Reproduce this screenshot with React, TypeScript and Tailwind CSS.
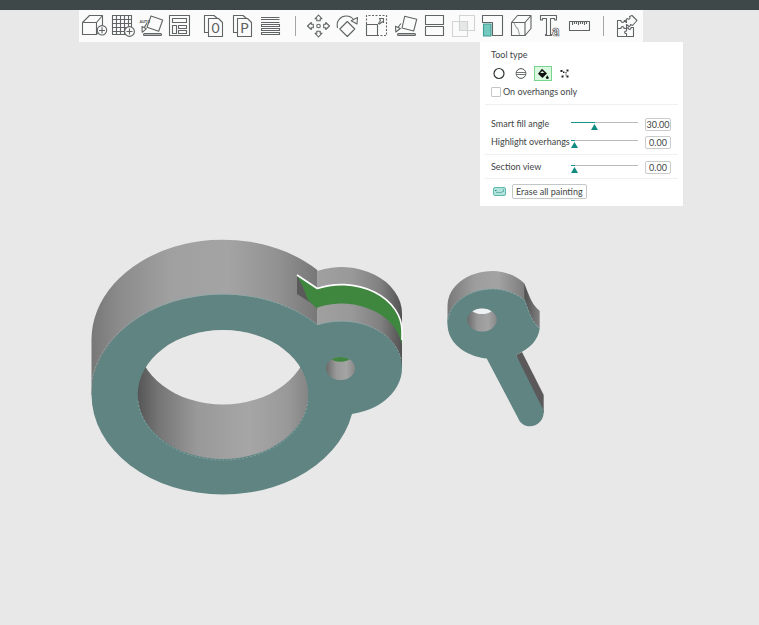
import { useState } from "react";
import type { ReactNode } from "react";

function ToolButton({ label, children }: { label: string; children: ReactNode }) {
  return (
    <button type="button" aria-label={label} className="flex h-8 w-[29px] items-center justify-center">
      <svg
        width="29"
        height="24"
        viewBox="0 0 29 24"
        fill="none"
        stroke="#606464"
        strokeWidth="1.1"
        strokeLinejoin="round"
        className="overflow-visible"
      >
        {children}
      </svg>
    </button>
  );
}

function Separator() {
  return (
    <div className="flex w-[18px] justify-center">
      <div className="h-5 w-px bg-[#a3a6a6]" />
    </div>
  );
}

function Pages({ glyph }: { glyph: string }) {
  return (
    <>
      <path d="M9.5 18.5H5.5V1.5H15L18.5 4.5" />
      <path d="M9.5 4.5H19.5L23.5 8.5V22.5H9.5Z" fill="#fbfbfb" />
      <text x="16.5" y="18.5" textAnchor="middle" stroke="none" fill="#5c6060" className="font-['Lato',sans-serif] text-[14px]">
        {glyph}
      </text>
    </>
  );
}

function Toolbar() {
  return (
    <nav aria-label="Toolbar" className="relative ml-[79px] flex w-fit items-center bg-[#fbfbfb] pr-0.5">
      <ToolButton label="Add">
        <path d="M3.5 8.5H17.5V20.5H3.5Z M3.5 8.5L10.5 1.5H23.5L17.5 8.5 M23.5 1.5V12 M17.5 20.5L19 18.5" />
        <circle cx="23" cy="16.3" r="4.7" fill="#fbfbfb" />
        <path d="M20 16.5H26M23 13.3V19.3" />
      </ToolButton>
      <ToolButton label="Add plate">
        <path d="M4.5 1.5H23.5V20.5H4.5Z M8.5 1.5V20.5M12.5 1.5V20.5M16.5 1.5V20.5M20.5 1.5V20.5M4.5 5.5H23.5M4.5 9.5H23.5M4.5 13.5H23.5M4.5 17.5H23.5" />
        <circle cx="21.5" cy="17.5" r="4.9" fill="#fbfbfb" />
        <path d="M18.5 17.5H24.5M21.5 14.5V20.5" />
      </ToolButton>
      <ToolButton label="Auto orient">
        <path d="M14 2L25.7 6L21.7 17.3L10 13.3Z" />
        <path d="M10 9L7.4 13.4M5 12.5L5.2 18.3L9.3 14.8Z" />
        <rect x="6.5" y="19.5" width="18" height="2" rx="1" fill="#b5b8b8" />
        <text x="2.5" y="8.5" stroke="none" fill="#4d5151" className="font-['Roboto',sans-serif] text-[4px] font-bold">AUTO</text>
      </ToolButton>
      <ToolButton label="Arrange">
        <path d="M3.5 1.5H23.5V21.5H3.5Z M6.5 4.5H20.5V8.5H6.5Z M6.5 11.5H10.5V19.5H6.5Z M12.5 11.5H20.5V14.5H12.5Z M12.5 16.5H20.5V19.5H12.5Z" />
      </ToolButton>
      <div className="w-1" />
      <ToolButton label="Split to objects">
        <Pages glyph="0" />
      </ToolButton>
      <ToolButton label="Split to parts">
        <Pages glyph="P" />
      </ToolButton>
      <ToolButton label="Variable layer height">
        <path d="M4 3.5H22.5M4 5.5H22.5M4 8.5H22.5M4.5 10.5H22.5V12.5H4.5Z M4.5 14.5H22.5V16.5H4.5Z M4.5 18.5H22.5V20.5H4.5Z" />
      </ToolButton>
      <Separator />
      <ToolButton label="Move">
        <circle cx="14.5" cy="12" r="1.8" />
        <path d="M14.5 1L18 4.8H16.2V6.8H12.8V4.8H11Z M14.5 23L18 19.2H16.2V17.2H12.8V19.2H11Z M3.5 12L7.3 8.5V10.3H9.3V13.7H7.3V15.5Z M25.5 12L21.7 8.5V10.3H19.7V13.7H21.7V15.5Z" />
      </ToolButton>
      <ToolButton label="Rotate">
        <path d="M14.3 7.5L21.8 15L14.3 22.5L6.8 15Z M4.5 14C2.6 6.2 8.5 2 13 2C17 2 19.5 3.8 20.8 6 M18.2 6.8L24.5 3.6L24 10Z" />
      </ToolButton>
      <ToolButton label="Scale">
        <path d="M4.5 10V1.5H24.5V21.5H16" strokeDasharray="2 1.5" />
        <path d="M4.5 10.5H15.5V21.5H4.5Z M16.5 9.5L18.5 6.5L17.5 4.5H21.5V8.5L20.3 7.8L17.5 10Z" />
      </ToolButton>
      <ToolButton label="Lay on face">
        <path d="M13.7 2.3L25.7 5.3L22.7 17L11 14Z M10 9.5L7.3 13M4.5 12.2L4.8 18L9.3 14.5Z" />
        <rect x="6.5" y="19.5" width="18" height="2" rx="1" fill="#b5b8b8" />
      </ToolButton>
      <ToolButton label="Cut">
        <path d="M5.5 1.5H23.5V10.5H5.5Z M5.5 12.5H23.5V21.5H5.5Z" />
      </ToolButton>
      <ToolButton label="Boolean">
        <g stroke="#d2d4d4">
          <path d="M3.5 7.5H18.5V22.5H3.5Z M10.5 1.5H25.5V16.5H10.5Z" />
          <path d="M10.5 7.5H18.5V16.5H10.5Z" fill="#e6e7e7" />
        </g>
      </ToolButton>
      <ToolButton label="Support painting">
        <path d="M4.5 1.5H24.5V21.5H14.5V8.5H4.5Z" />
        <path d="M5.5 10H13V22H5.5Z" fill="#74c9bf" stroke="#3f9e94" />
      </ToolButton>
      <ToolButton label="Seam painting">
        <path d="M4.5 8.5H18V21.5H4.5Z M4.5 8.5L10.5 1.5H24L18 8.5 M24 1.5V14.5L18 21.5" />
        <path d="M7 9L9 13L11 15L12.5 21" stroke="#a3a6a6" />
      </ToolButton>
      <ToolButton label="Text">
        <path d="M4.5 1.5H20.5V6H18.5V4.5H14.5V20.5H15.5V21.5H9.5V20.5H10.5V4.5H6.5V6H4.5Z" />
        <text x="16" y="22" strokeWidth="0.7" fill="#fbfbfb" className="font-['Roboto',sans-serif] text-[14px] font-bold">a</text>
      </ToolButton>
      <ToolButton label="Measure">
        <path d="M4.5 7.5H24.5V16.5H4.5Z M7.5 8V11M9.5 8V10M11.5 8V10M13.5 8V11M15.5 8V10M17.5 8V10M19.5 8V11M21.5 8V10" />
      </ToolButton>
      <Separator />
      <ToolButton label="Assembly view">
        <path d="M5.5 6.5H9C8.5 9 12.8 9 12.3 6.5H14.5V8.5L13 7.5L15 4.5C17 6 19 4.5 17.5 2.5L20 1.5L25 6.5L20.5 11.5L18.5 10.5C18.5 12 17.5 13 16.5 12L14.5 10.5V14.5H12C12.5 12 8.5 12 9 14.5H5.5Z" />
        <path d="M5.5 14.5V22.5H21.5V13.5H19C19.3 16 16 16 16.2 13.5L14.5 14.5V17C12 16.5 12 20 14.5 19.5V22.5" />
      </ToolButton>
    </nav>
  );
}

const toolIcons: { name: string; icon: ReactNode }[] = [
  { name: "Circle", icon: <circle cx="8" cy="6.5" r="5" fill="none" stroke="#303434" strokeWidth="1.2" /> },
  {
    name: "Sphere",
    icon: (
      <g fill="none" stroke="#505454">
        <circle cx="8" cy="6.5" r="4.9" />
        <path d="M3.5 5.5H12.5M3.5 7.5H12.5" strokeWidth="0.8" />
      </g>
    ),
  },
  {
    name: "Smart fill",
    icon: (
      <g fill="#111" stroke="none">
        <path d="M7 1.8L12 6.6L7.4 11L3 6.8Z" />
        <path d="M12.3 8.3L13.5 10.3A1.3 1.3 0 1 1 11.1 10.3Z" />
        <path d="M5.2 6.1L7.2 4L9.3 6.1Z" fill="#d9f8df" />
      </g>
    ),
  },
  {
    name: "Gap fill",
    icon: (
      <path
        d="M3.5 3h2v2h-2z M6 4.5h1.5v1.5h-1.5z M9.5 2.5h2v2h-2z M8.5 5h1v1.5h-1z M4.5 8.5h2v2h-2z M9.5 8.5h2v2h-2z M8.5 7.5h1v1h-1z"
        fill="#222"
      />
    ),
  },
];

function SliderRow({ id, label, initial }: { id: string; label: string; initial: number }) {
  const [value, setValue] = useState(initial);
  const fill = 4 + (value / 90) * 60;
  return (
    <div className="flex h-[18px] items-center pr-3 pl-[11px]">
      <label htmlFor={id} className="w-20 whitespace-nowrap">
        {label}
      </label>
      <input
        id={id}
        type="range"
        min={0}
        max={90}
        value={value}
        onChange={(e) => setValue(Number(e.target.value))}
        style={{ backgroundImage: `linear-gradient(to right, #16938a ${fill}px, #b8bcbc ${fill}px)` }}
        className="h-[14px] w-[67px] appearance-none bg-[length:100%_1px] bg-[position:0_5px] bg-no-repeat [&::-webkit-slider-runnable-track]:h-[14px] [&::-webkit-slider-thumb]:mt-[7px] [&::-webkit-slider-thumb]:h-[6px] [&::-webkit-slider-thumb]:w-[7px] [&::-webkit-slider-thumb]:appearance-none [&::-webkit-slider-thumb]:bg-[#128c82] [&::-webkit-slider-thumb]:[clip-path:polygon(50%_0,100%_100%,0_100%)]"
      />
      <input
        type="text"
        aria-label={`${label} value`}
        value={value.toFixed(2)}
        onChange={(e) => setValue(Number(e.target.value) || 0)}
        className="ml-auto h-[13px] w-[26px] rounded-[2px] border border-[#c9cccc] bg-white text-center"
      />
    </div>
  );
}

function PaintPanel() {
  const [tool, setTool] = useState("Smart fill");
  return (
    <section
      aria-label="Support painting"
      className="relative ml-[480px] w-[203px] bg-white pt-[7px] pb-[7px] font-['Lato','Liberation_Sans',sans-serif] text-[9px] leading-3 text-[#424646]"
    >
      <h2 className="px-[11px]">Tool type</h2>
      <div className="mt-1.5 flex gap-1.5 px-[11px]">
        {toolIcons.map(({ name, icon }) => (
          <button
            key={name}
            type="button"
            aria-label={name}
            aria-pressed={tool === name}
            onClick={() => setTool(name)}
            className={
              tool === name
                ? "h-[13px] w-4 bg-[#d9f8df] outline outline-[#7ad48f]"
                : "h-[13px] w-4"
            }
          >
            <svg width="16" height="13" viewBox="0 0 16 13">
              {icon}
            </svg>
          </button>
        ))}
      </div>
      <label className="mt-1.5 flex items-center gap-0.5 px-[11px]">
        <input
          type="checkbox"
          className="size-[10px] appearance-none rounded-[1px] border border-[#c4c7c7] bg-white checked:bg-[#16938a]"
        />
        On overhangs only
      </label>
      <hr className="mx-[5px] mt-1.5 border-[#f0f0f0]" />
      <div className="mt-[10px]">
        <SliderRow id="fill-angle" label="Smart fill angle" initial={30} />
        <SliderRow id="overhangs" label="Highlight overhangs" initial={0} />
      </div>
      <hr className="mx-[5px] mt-[3px] border-[#f0f0f0]" />
      <div className="mt-[3px]">
        <SliderRow id="section" label="Section view" initial={0} />
      </div>
      <hr className="mx-[5px] mt-0.5 border-[#f0f0f0]" />
      <div className="mt-[5px] flex items-center gap-1.5 px-[13px]">
        <button type="button" aria-label="Keyboard shortcuts">
          <svg width="13" height="9" viewBox="0 0 13 9" className="block">
            <rect x="0.5" y="0.5" width="12" height="8" rx="1.5" fill="#b2e2dc" stroke="#5fb9ae" />
            <path d="M2 3.5H3.5M3.5 5.5H4.5M5.5 5.5H6.5M7.5 5.5H8.5M9.5 4.5H10.5M10 3H11" stroke="#26897f" />
          </svg>
        </button>
        <button type="button" className="h-[15px] rounded-[2px] border border-[#c4c7c7] bg-white px-[3px] leading-[13px]">
          Erase all painting
        </button>
      </div>
    </section>
  );
}

function Model() {
  return (
    <svg
      role="img"
      aria-label="Ring and key model"
      viewBox="0 0 759 625"
      preserveAspectRatio="xMidYMin meet"
      className="absolute inset-0 h-full w-full"
    >
      <defs>
        <linearGradient id="ringWall" gradientUnits="userSpaceOnUse" x1="91" x2="318" y1="0" y2="0">
          <stop offset="0" stopColor="#777" />
          <stop offset="0.12" stopColor="#8b8b8b" />
          <stop offset="0.35" stopColor="#a0a0a0" />
          <stop offset="0.6" stopColor="#a4a4a4" />
          <stop offset="0.82" stopColor="#929292" />
          <stop offset="1" stopColor="#777" />
        </linearGradient>
        <linearGradient id="boreWall" gradientUnits="userSpaceOnUse" x1="138" x2="308" y1="0" y2="0">
          <stop offset="0" stopColor="#565656" />
          <stop offset="0.12" stopColor="#757575" />
          <stop offset="0.35" stopColor="#999" />
          <stop offset="0.65" stopColor="#a6a6a6" />
          <stop offset="0.88" stopColor="#999" />
          <stop offset="1" stopColor="#858585" />
        </linearGradient>
        <linearGradient id="lugWall" gradientUnits="userSpaceOnUse" x1="317" x2="402" y1="0" y2="0">
          <stop offset="0" stopColor="#a0a0a0" />
          <stop offset="0.4" stopColor="#999" />
          <stop offset="0.75" stopColor="#808080" />
          <stop offset="1" stopColor="#525252" />
        </linearGradient>
        <linearGradient id="holeWall">
          <stop offset="0" stopColor="#6a6a6a" />
          <stop offset="0.35" stopColor="#999" />
          <stop offset="0.7" stopColor="#a4a4a4" />
          <stop offset="1" stopColor="#888" />
        </linearGradient>
        <linearGradient id="keyWall" gradientUnits="userSpaceOnUse" x1="448" x2="525" y1="0" y2="0">
          <stop offset="0" stopColor="#7a7a7a" />
          <stop offset="0.35" stopColor="#9d9d9d" />
          <stop offset="0.65" stopColor="#a3a3a3" />
          <stop offset="1" stopColor="#7c7c7c" />
        </linearGradient>
        <linearGradient id="notchWall" gradientUnits="userSpaceOnUse" x1="524" x2="540" y1="0" y2="0">
          <stop offset="0" stopColor="#4f4f4f" />
          <stop offset="1" stopColor="#828282" />
        </linearGradient>
        <clipPath id="bore">
          <ellipse cx="223" cy="394.5" rx="85.3" ry="64.5" />
        </clipPath>
        <clipPath id="lugHole">
          <ellipse cx="340.5" cy="368.5" rx="14.5" ry="11.5" />
        </clipPath>
        <clipPath id="keyHole">
          <ellipse cx="482" cy="320" rx="14.7" ry="11.5" />
        </clipPath>
      </defs>

      <path d="M317.3 271A60.5 46.5 0 0 1 402 313.5V368H317.3Z" fill="url(#lugWall)" />
      <path d="M91.5 394.5V340A131.5 100 0 0 1 317.3 270V394.5Z" fill="url(#ringWall)" />
      <path d="M297 275V294L317.3 307V289Z" fill="#5a5a5a" />
      <path d="M297 275L317.3 288.5A60.5 46.5 0 0 1 402 330.5V343H401L341 350L317.3 309L308 300L303 287Z" fill="#3f863f" />
      <path d="M317.3 307.5A60.5 46.5 0 0 1 402 350.5V368H317.3Z" fill="url(#lugWall)" />
      <path d="M297 275L317.3 288.5A60.5 46.5 0 0 1 402 330.5V340" fill="none" stroke="#fff" strokeWidth="1.6" />
      <ellipse cx="341.5" cy="368" rx="60.5" ry="46.5" fill="#5f8482" />
      <ellipse cx="223" cy="394.5" rx="131.5" ry="100" fill="#5f8482" />
      <path d="M92 380A131.5 100 0 0 1 317.3 324.8A60.5 46.5 0 0 1 401 359" fill="none" stroke="#86aaa8" strokeWidth="0.8" strokeDasharray="3 1" />
      <g clipPath="url(#bore)">
        <rect x="137" y="329" width="173" height="132" fill="url(#boreWall)" />
        <ellipse cx="223" cy="340" rx="85.3" ry="64.5" fill="#e8e8e8" />
      </g>
      <path d="M138 401A85.3 64.5 0 0 0 308 401" fill="none" stroke="#91b1af" strokeWidth="0.7" strokeDasharray="2 2" />
      <g clipPath="url(#lugHole)">
        <rect x="326" y="357" width="29" height="24" fill="url(#holeWall)" />
        <ellipse cx="340.5" cy="350.5" rx="14.5" ry="11.2" fill="#3f863f" />
      </g>

      <path d="M447.5 324V306C447.5 286 468 271 493 271C505 271 516 276 524 283L526 301V330Z" fill="url(#keyWall)" />
      <path d="M524 283C528 291 530 303 539.7 311V328.5L525 315Z" fill="url(#notchWall)" />
      <path d="M516 355L522 352L543.7 395V413H540Z" fill="#5b5959" />
      <path
        d="M447.5 324C447.5 304 468 289 493 289C505 289 517 294 525 300.5C528 310 531 321 539.7 328.5C538 340 531 348 516 355L543.4 410C545 419 538 426.3 530 426.3C524 426.3 520 423 518 418L486.7 358.5C464 356 447.5 342 447.5 324Z"
        fill="#5f8482"
      />
      <path d="M447.5 324C447.5 304 468 289 493 289C505 289 517 294 525 300.5C528 310 531 321 539.7 328.5" fill="none" stroke="#86aaa8" strokeWidth="0.8" strokeDasharray="3 1" />
      <g clipPath="url(#keyHole)">
        <rect x="467" y="308" width="30" height="24" fill="url(#holeWall)" />
        <ellipse cx="482" cy="302.5" rx="14.7" ry="11.5" fill="#edf1f3" />
      </g>
    </svg>
  );
}

export default function App() {
  return (
    <div className="flex min-h-screen flex-col bg-[#e8e8e8]">
      <main className="relative grow">
        <Model />
        <header className="relative h-[10px] bg-[#3f4848]" />
        <Toolbar />
        <PaintPanel />
      </main>
    </div>
  );
}
